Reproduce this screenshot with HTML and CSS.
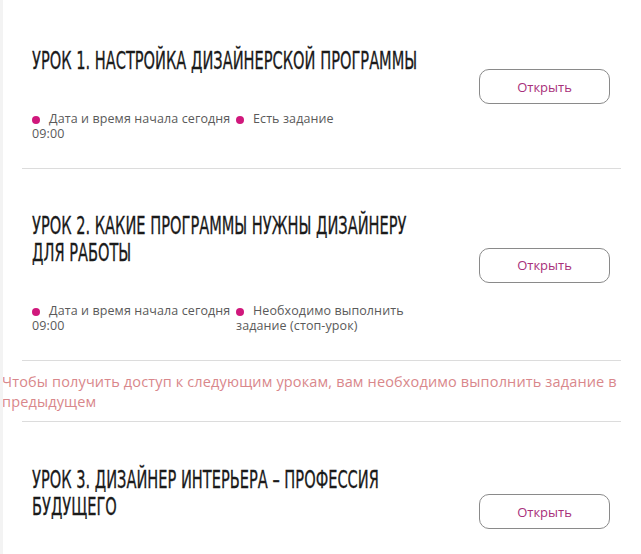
FILE: index.html
```html
<!DOCTYPE html>
<html lang="ru">
<head>
    <meta charset="UTF-8">
    <meta name="viewport" content="width=device-width, initial-scale=1.0">
    <title>Уроки курса</title>
    <link rel="stylesheet" href="styles.css">
</head>
<body>
    <div class="course">
        <div class="lesson">
            <div class="lesson-info">
                <h2 class="lesson-title">Урок 1. Настройка дизайнерской программы</h2>
                <div class="lesson-meta">
                    <div class="meta-item"><span class="dot"></span>Дата и время начала сегодня 09:00</div>
                    <div class="meta-item"><span class="dot"></span>Есть задание</div>
                </div>
            </div>
            <button type="button" class="open-btn">Открыть</button>
        </div>

        <div class="lesson">
            <div class="lesson-info">
                <h2 class="lesson-title">Урок 2. Какие программы нужны дизайнеру для работы</h2>
                <div class="lesson-meta">
                    <div class="meta-item"><span class="dot"></span>Дата и время начала сегодня 09:00</div>
                    <div class="meta-item"><span class="dot"></span>Необходимо выполнить задание (стоп-урок)</div>
                </div>
            </div>
            <button type="button" class="open-btn">Открыть</button>
        </div>

        <p class="lock-note">Чтобы получить доступ к следующим урокам, вам необходимо выполнить задание в предыдущем</p>

        <div class="lesson">
            <div class="lesson-info">
                <h2 class="lesson-title">Урок 3. Дизайнер интерьера – профессия будущего</h2>
                <div class="lesson-meta">
                    <div class="meta-item"><span class="dot"></span>Есть задание</div>
                </div>
            </div>
            <button type="button" class="open-btn">Открыть</button>
        </div>
    </div>
</body>
</html>
```

FILE: styles.css
```css
html {
    background-color: #f3f3f3; /* полоска слева */
}

body {
    margin: 0 0 0 3px;
    min-height: 100vh;
    background-color: #fff;
    font-family: "Open Sans", "Noto Sans", sans-serif;
}

.course {
    padding-top: 4px;
}

.lesson {
    display: flex;
    align-items: center;
    margin-left: 19px;
    margin-right: 20px;
    padding: 44px 11px 27px 10px;
    border-bottom: 1px solid #dcdcdc;
}

.lesson-info {
    flex: 1;
    min-width: 0;
}

/* узкий заголовок: сжатый шрифт, дополнительно сжатый по ширине */
.lesson-title {
    width: 589px;
    margin: 0;
    font-family: "DejaVu Sans Condensed", "DejaVu Sans", sans-serif;
    font-size: 24px;
    font-weight: 400;
    line-height: 27px;
    text-transform: uppercase;
    color: #1a1a1a;
    -webkit-text-stroke: 0.3px #1a1a1a;
    transform: scaleX(0.676);
    transform-origin: left top;
}

.lesson-meta {
    display: flex;
    margin-top: 36px;
    width: 410px;
}

.meta-item {
    width: 204px;
    font-size: 12.5px;
    letter-spacing: 0.1px;
    line-height: 15px;
    color: #5a5a5a;
}

.dot {
    display: inline-block;
    width: 8px;
    height: 8px;
    margin-right: 9px;
    vertical-align: -1px;
    border-radius: 50%;
    background-color: #d0187c;
}

.open-btn {
    flex: none;
    width: 131px;
    height: 35px;
    margin-bottom: 16px;
    padding: 0;
    border: 1px solid #8a8a8a;
    border-radius: 10px;
    background-color: #fff;
    font-family: "Open Sans", "Noto Sans", sans-serif;
    font-size: 13px;
    color: #a8307a;
    cursor: pointer;
}

.lock-note {
    margin: 11px 18px 0 -1px;
    padding-bottom: 9px;
    font-size: 14.5px;
    letter-spacing: 0.15px;
    line-height: 20px;
    color: #d9878b;
}

.lock-note + .lesson {
    border-top: 1px solid #dcdcdc;
    padding-top: 45px;
}
```
